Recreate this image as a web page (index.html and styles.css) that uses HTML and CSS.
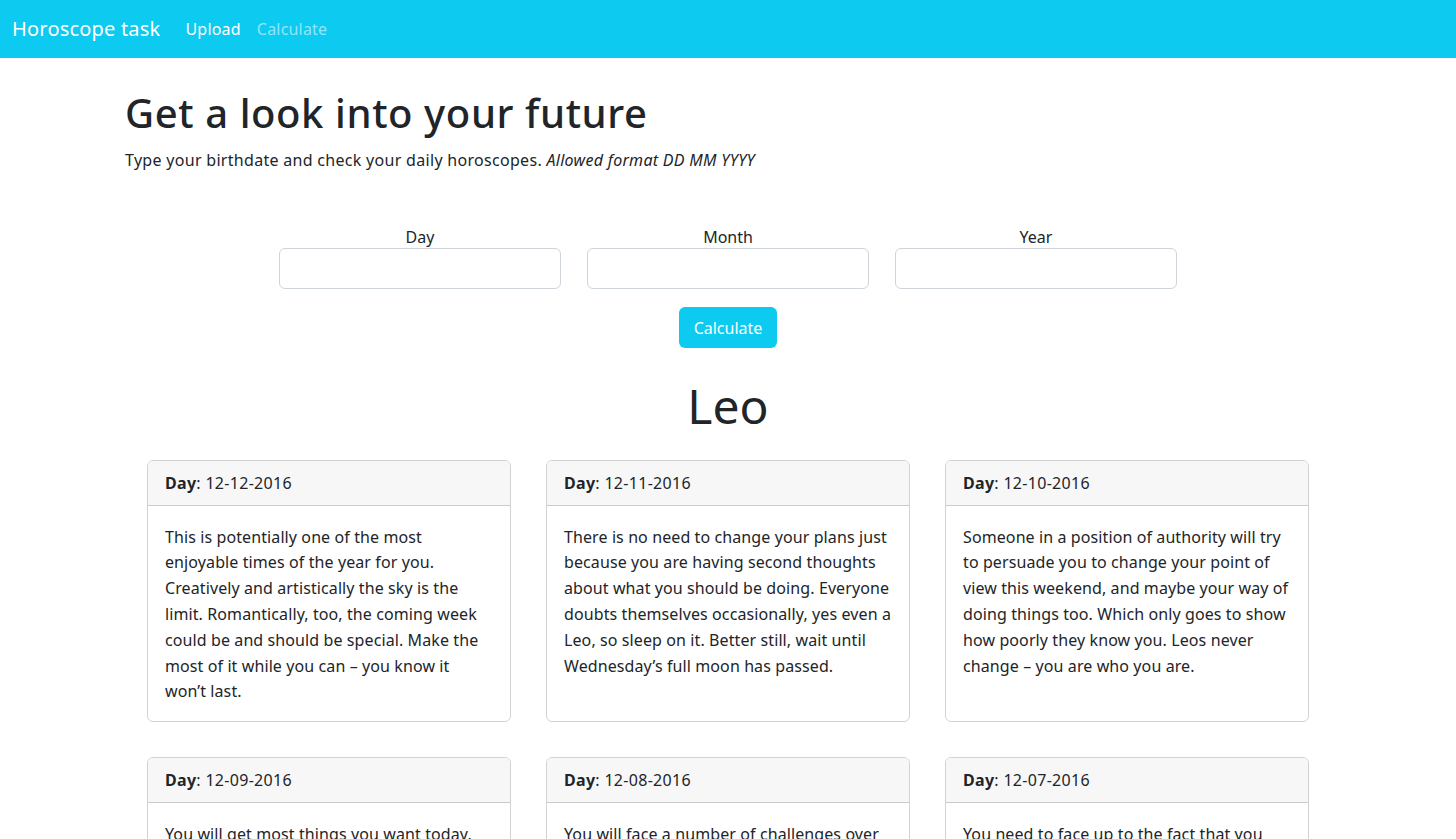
FILE: index.html
```html
<!DOCTYPE html>
<html lang="en">
<head>
<meta charset="utf-8">
<title>Horoscope task</title>
<link rel="stylesheet" href="styles.css">
</head>
<body>
<nav class="navbar">
  <a class="brand" href="#">Horoscope task</a>
  <a class="nav-link active" href="#">Upload</a>
  <a class="nav-link" href="#">Calculate</a>
</nav>
<main class="container">
  <h1 class="title">Get a look into your future</h1>
  <p class="lead">Type your birthdate and check your daily horoscopes. <em>Allowed format DD MM YYYY</em></p>
  <form class="date-form">
    <div class="fields">
      <label class="field"><span>Day</span><input type="text"></label>
      <label class="field"><span>Month</span><input type="text"></label>
      <label class="field"><span>Year</span><input type="text"></label>
    </div>
    <button type="button" class="btn">Calculate</button>
  </form>
  <h2 class="sign">Leo</h2>
  <div class="cards">
    <div class="card">
      <div class="card-header"><b>Day</b>: 12-12-2016</div>
      <div class="card-body">This is potentially one of the most enjoyable times of the year for you. Creatively and artistically the sky is the limit. Romantically, too, the coming week could be and should be special. Make the most of it while you can – you know it won’t last.</div>
    </div>
    <div class="card">
      <div class="card-header"><b>Day</b>: 12-11-2016</div>
      <div class="card-body">There is no need to change your plans just because you are having second thoughts about what you should be doing. Everyone doubts themselves occasionally, yes even a Leo, so sleep on it. Better still, wait until Wednesday’s full moon has passed.</div>
    </div>
    <div class="card">
      <div class="card-header"><b>Day</b>: 12-10-2016</div>
      <div class="card-body">Someone in a position of authority will try to persuade you to change your point of view this weekend, and maybe your way of doing things too. Which only goes to show how poorly they know you. Leos never change – you are who you are.</div>
    </div>
    <div class="card">
      <div class="card-header"><b>Day</b>: 12-09-2016</div>
      <div class="card-body">You will get most things you want today, but don’t get greedy. Enjoy what comes your way and be grateful for it.</div>
    </div>
    <div class="card">
      <div class="card-header"><b>Day</b>: 12-08-2016</div>
      <div class="card-body">You will face a number of challenges over the next few days, but you will handle them all with ease.</div>
    </div>
    <div class="card">
      <div class="card-header"><b>Day</b>: 12-07-2016</div>
      <div class="card-body">You need to face up to the fact that you cannot please everyone all of the time.</div>
    </div>
  </div>
</main>
</body>
</html>
```
FILE: styles.css
```css
* { box-sizing: border-box; }
html, body { margin: 0; padding: 0; }
body {
  font-family: "Noto Sans", "Open Sans", sans-serif;
  font-size: 16px;
  line-height: 1.5;
  color: #212529;
  background: #fff;
}
a { text-decoration: none; }
.navbar {
  height: 58px;
  background: #0dcaf0;
  display: flex;
  align-items: center;
  padding: 0 12px;
}
.brand {
  color: #fff;
  font-size: 20px;
  letter-spacing: 0.2px;
  margin-right: 25px;
}
.nav-link {
  color: rgba(255,255,255,0.55);
  font-size: 16px;
  letter-spacing: 0.2px;
  margin-right: 16px;
}
.nav-link.active { color: #fff; }
.container {
  width: 1206px;
  margin: 0 auto;
  padding-top: 1px;
  padding-bottom: 40px;
}
.title {
  font-size: 40px;
  font-weight: 500;
  line-height: 1.2;
  letter-spacing: 0.6px;
  margin: 30px 0 0;
}
.lead {
  margin: 11px 0 0;
  font-size: 16px;
  letter-spacing: 0.3px;
}
.date-form {
  display: flex;
  flex-direction: column;
  align-items: center;
  margin-top: 53px;
}
.fields {
  display: flex;
  gap: 26px;
}
.field {
  display: flex;
  flex-direction: column;
  align-items: center;
  width: 282px;
}
.field span { line-height: 24px; margin-bottom: -1px; }
.field input {
  width: 100%;
  height: 41px;
  border: 1px solid #ced4da;
  border-radius: 6px;
  font: inherit;
  padding: 6px 12px;
}
.btn {
  margin-top: 18px;
  width: 98px;
  height: 41px;
  background: #0dcaf0;
  color: #fff;
  border: 0;
  border-radius: 6px;
  font: inherit;
}
.sign {
  text-align: center;
  font-size: 48px;
  font-weight: 400;
  line-height: 1.2;
  margin: 29px 0 0;
}
.cards {
  width: 1162px;
  margin: 25px auto 0;
  display: grid;
  grid-template-columns: repeat(3, 364px);
  column-gap: 35px;
  row-gap: 35px;
}
.card {
  border: 1px solid rgba(0,0,0,0.175);
  border-radius: 6px;
  overflow: hidden;
}
.card-header {
  background: #f7f7f7;
  border-bottom: 1px solid rgba(0,0,0,0.175);
  height: 45px;
  padding: 10px 17px;
  letter-spacing: 0.3px;
}
.card-body {
  padding: 19px 17px 16px;
  line-height: 25.8px;
  letter-spacing: 0.1px;
}
```
